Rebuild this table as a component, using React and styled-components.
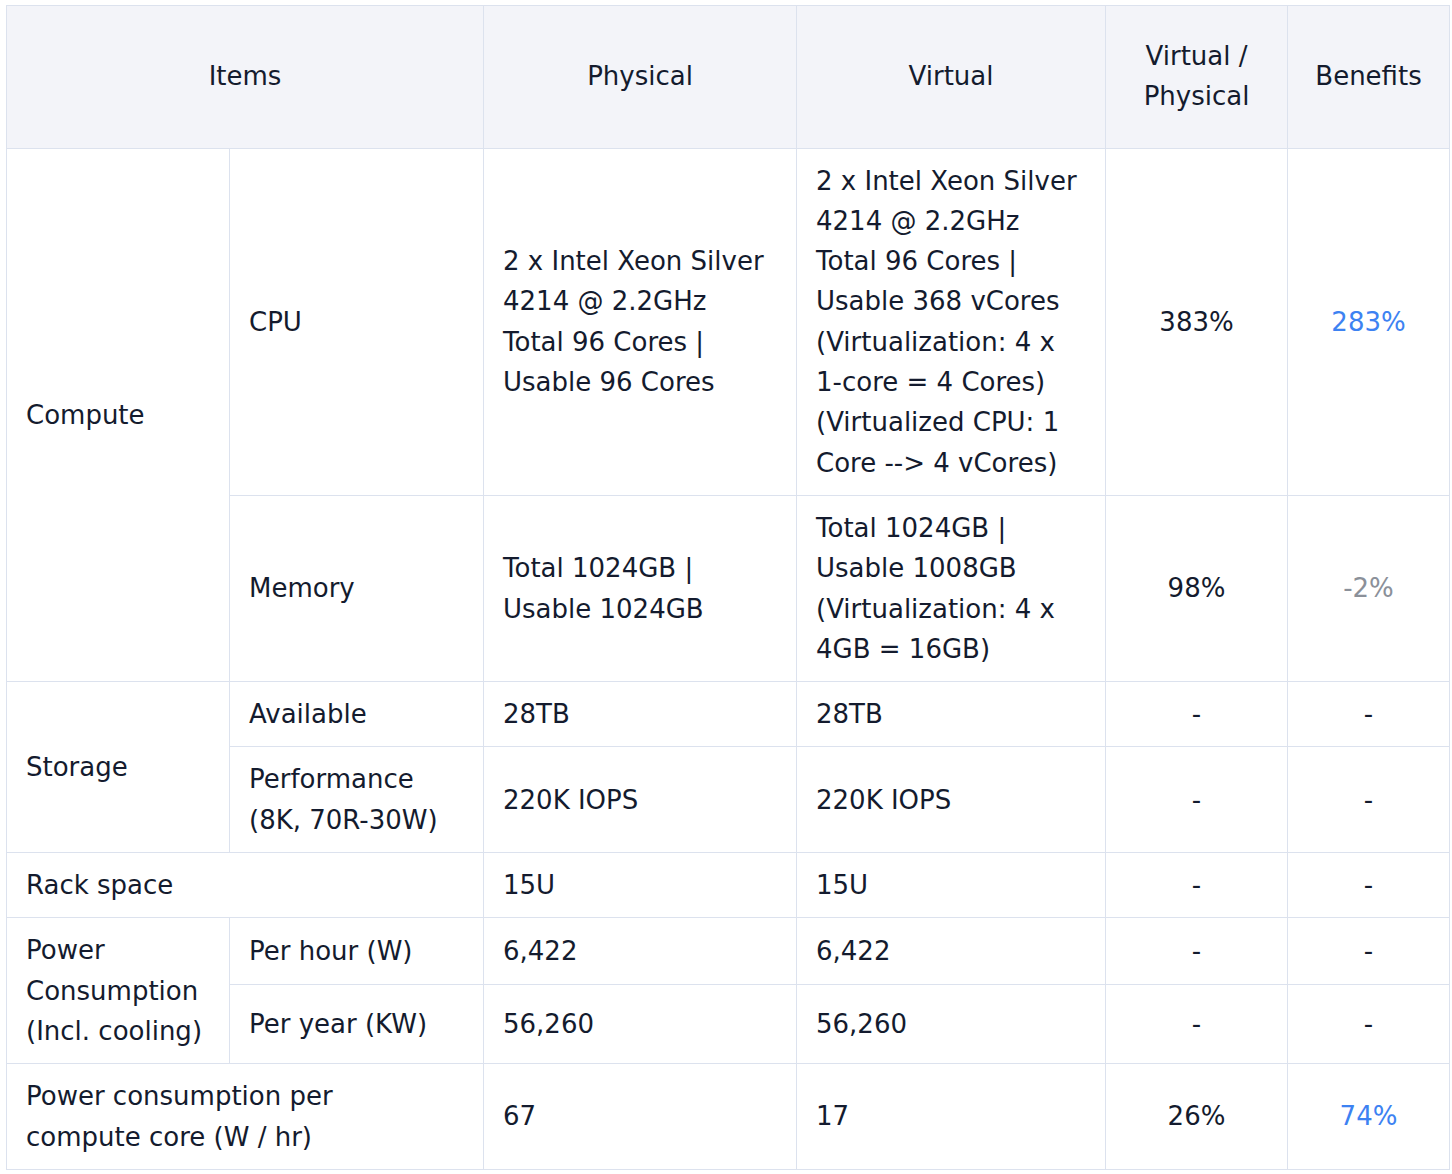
import styled, { createGlobalStyle } from 'styled-components';

const GlobalStyle = createGlobalStyle`
  body {
    margin: 0;
    background: #fff;
    font-family: "DejaVu Sans", "Liberation Sans", sans-serif;
  }
`;

const Page = styled.div`
  padding: 5px 6px;
`;

const Table = styled.table`
  width: 1443px;
  border-collapse: collapse;
  table-layout: fixed;
  color: #141b2e;
  font-size: 26px;
  line-height: 40.3px;
`;

const Row = styled.tr`
  height: ${(p) => (p.$height ? `${p.$height}px` : 'auto')};
`;

const Head = styled.th`
  background: #f3f4f9;
  border: 1px solid #dce2ee;
  padding: 30px 19px 31px;
  font-weight: 400;
  text-align: center;
  vertical-align: middle;
`;

const Cell = styled.td`
  border: 1px solid #dce2ee;
  padding: 12px 19px;
  vertical-align: middle;
  text-align: ${(p) => (p.$center ? 'center' : 'left')};
  color: ${(p) =>
    p.$tone === 'good' ? '#3d82f2' : p.$tone === 'muted' ? '#8b9099' : 'inherit'};
`;

const Lines = ({ children }) =>
  children.map((line, i) => (
    <span key={i}>
      {line}
      {i < children.length - 1 && <br />}
    </span>
  ));

const widths = [223, 254, 313, 309, 182, 162];

export default function App() {
  return (
    <Page>
      <GlobalStyle />
      <Table>
        <colgroup>
          {widths.map((w, i) => (
            <col key={i} style={{ width: w }} />
          ))}
        </colgroup>
        <thead>
          <tr>
            <Head colSpan={2}>Items</Head>
            <Head>Physical</Head>
            <Head>Virtual</Head>
            <Head>
              <Lines>{['Virtual /', 'Physical']}</Lines>
            </Head>
            <Head>Benefits</Head>
          </tr>
        </thead>
        <tbody>
          <tr>
            <Cell rowSpan={2}>Compute</Cell>
            <Cell>CPU</Cell>
            <Cell>
              <Lines>
                {['2 x Intel Xeon Silver', '4214 @ 2.2GHz', 'Total 96 Cores |', 'Usable 96 Cores']}
              </Lines>
            </Cell>
            <Cell>
              <Lines>
                {[
                  '2 x Intel Xeon Silver',
                  '4214 @ 2.2GHz',
                  'Total 96 Cores |',
                  'Usable 368 vCores',
                  '(Virtualization: 4 x',
                  '1-core = 4 Cores)',
                  '(Virtualized CPU: 1',
                  'Core --> 4 vCores)',
                ]}
              </Lines>
            </Cell>
            <Cell $center>383%</Cell>
            <Cell $center $tone="good">283%</Cell>
          </tr>
          <tr>
            <Cell>Memory</Cell>
            <Cell>
              <Lines>{['Total 1024GB |', 'Usable 1024GB']}</Lines>
            </Cell>
            <Cell>
              <Lines>
                {['Total 1024GB |', 'Usable 1008GB', '(Virtualization: 4 x', '4GB = 16GB)']}
              </Lines>
            </Cell>
            <Cell $center>98%</Cell>
            <Cell $center $tone="muted">-2%</Cell>
          </tr>
          <tr>
            <Cell rowSpan={2}>Storage</Cell>
            <Cell>Available</Cell>
            <Cell>28TB</Cell>
            <Cell>28TB</Cell>
            <Cell $center>-</Cell>
            <Cell $center>-</Cell>
          </tr>
          <tr>
            <Cell>
              <Lines>{['Performance', '(8K, 70R-30W)']}</Lines>
            </Cell>
            <Cell>220K IOPS</Cell>
            <Cell>220K IOPS</Cell>
            <Cell $center>-</Cell>
            <Cell $center>-</Cell>
          </tr>
          <tr>
            <Cell colSpan={2}>Rack space</Cell>
            <Cell>15U</Cell>
            <Cell>15U</Cell>
            <Cell $center>-</Cell>
            <Cell $center>-</Cell>
          </tr>
          <Row $height={67}>
            <Cell rowSpan={2}>
              <Lines>{['Power', 'Consumption', '(Incl. cooling)']}</Lines>
            </Cell>
            <Cell>Per hour (W)</Cell>
            <Cell>6,422</Cell>
            <Cell>6,422</Cell>
            <Cell $center>-</Cell>
            <Cell $center>-</Cell>
          </Row>
          <Row $height={79}>
            <Cell>Per year (KW)</Cell>
            <Cell>56,260</Cell>
            <Cell>56,260</Cell>
            <Cell $center>-</Cell>
            <Cell $center>-</Cell>
          </Row>
          <tr>
            <Cell colSpan={2}>
              <Lines>{['Power consumption per', 'compute core (W / hr)']}</Lines>
            </Cell>
            <Cell>67</Cell>
            <Cell>17</Cell>
            <Cell $center>26%</Cell>
            <Cell $center $tone="good">74%</Cell>
          </tr>
        </tbody>
      </Table>
    </Page>
  );
}
